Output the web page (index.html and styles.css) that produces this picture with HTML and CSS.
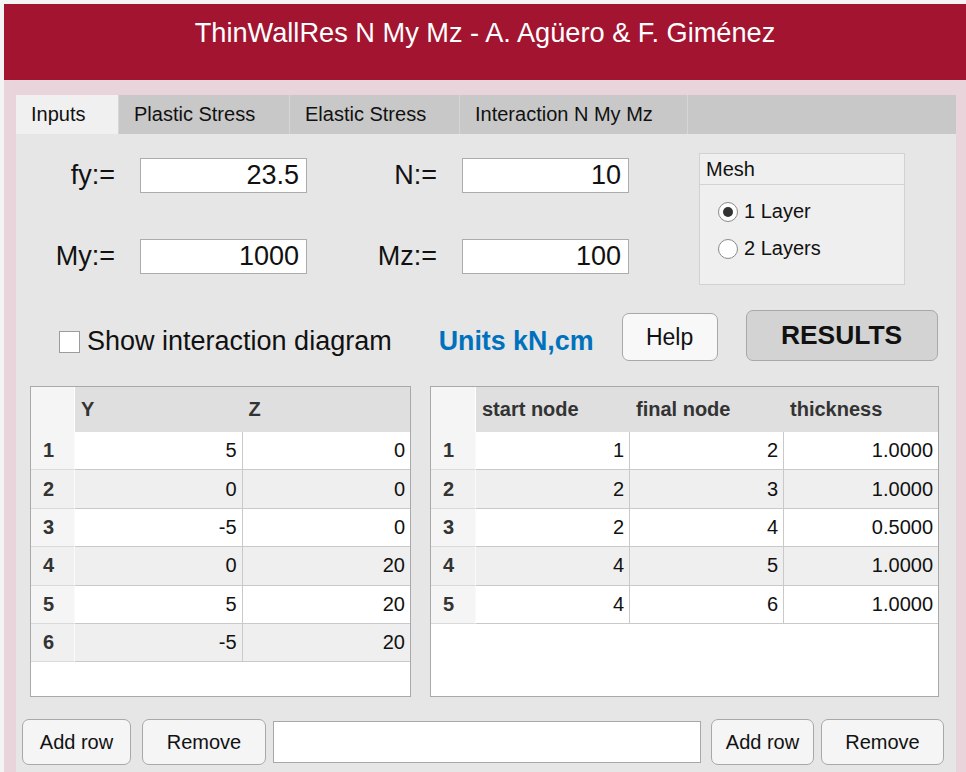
FILE: index.html
```html
<!DOCTYPE html>
<html lang="en">
<head>
    <meta charset="UTF-8">
    <meta name="viewport" content="width=device-width, initial-scale=1.0">
    <title>ThinWallRes N My Mz</title>
    <link rel="stylesheet" href="styles.css">
</head>
<body>
    <div class="window">
        <div class="app-header">ThinWallRes N My Mz - A. Agüero &amp; F. Giménez</div>
        <div class="app-body">
            <div class="tab-group">
                <div class="tab-bar">
                    <div class="tab active tab-inputs">Inputs</div>
                    <div class="tab tab-plastic">Plastic Stress</div>
                    <div class="tab tab-elastic">Elastic Stress</div>
                    <div class="tab tab-interaction">Interaction N My Mz</div>
                </div>
                <div class="tab-content">
                    <div class="top-row">
                        <div class="params">
                            <label class="param-label" for="fy">fy:=</label>
                            <input class="param-input" id="fy" type="text" value="23.5">
                            <label class="param-label" for="n">N:=</label>
                            <input class="param-input" id="n" type="text" value="10">
                            <label class="param-label" for="my">My:=</label>
                            <input class="param-input" id="my" type="text" value="1000">
                            <label class="param-label" for="mz">Mz:=</label>
                            <input class="param-input" id="mz" type="text" value="100">
                        </div>
                        <div class="mesh">
                            <div class="mesh-title">Mesh</div>
                            <div class="mesh-options">
                                <div class="radio-row"><span class="radio checked"></span>1 Layer</div>
                                <div class="radio-row"><span class="radio"></span>2 Layers</div>
                            </div>
                        </div>
                    </div>

                    <div class="action-row">
                        <div class="check-group">
                            <span class="checkbox"></span>
                            <span>Show interaction diagram</span>
                        </div>
                        <div class="units">Units kN,cm</div>
                        <button class="btn btn-help" type="button">Help</button>
                        <button class="btn btn-results" type="button">RESULTS</button>
                    </div>

                    <div class="tables-row">
                        <div class="grid-box grid-nodes">
                            <table class="grid">
                                <colgroup>
                                    <col class="col-rownum">
                                    <col class="col-node">
                                    <col class="col-node">
                                </colgroup>
                                <thead>
                                    <tr><th class="corner"></th><th>Y</th><th>Z</th></tr>
                                </thead>
                                <tbody>
                                    <tr><th>1</th><td>5</td><td>0</td></tr>
                                    <tr><th>2</th><td>0</td><td>0</td></tr>
                                    <tr><th>3</th><td>-5</td><td>0</td></tr>
                                    <tr><th>4</th><td>0</td><td>20</td></tr>
                                    <tr><th>5</th><td>5</td><td>20</td></tr>
                                    <tr><th>6</th><td>-5</td><td>20</td></tr>
                                </tbody>
                            </table>
                        </div>
                        <div class="grid-box grid-elements">
                            <table class="grid">
                                <colgroup>
                                    <col class="col-rownum">
                                    <col class="col-elem">
                                    <col class="col-elem">
                                    <col class="col-elem">
                                </colgroup>
                                <thead>
                                    <tr><th class="corner"></th><th>start node</th><th>final node</th><th>thickness</th></tr>
                                </thead>
                                <tbody>
                                    <tr><th>1</th><td>1</td><td>2</td><td>1.0000</td></tr>
                                    <tr><th>2</th><td>2</td><td>3</td><td>1.0000</td></tr>
                                    <tr><th>3</th><td>2</td><td>4</td><td>0.5000</td></tr>
                                    <tr><th>4</th><td>4</td><td>5</td><td>1.0000</td></tr>
                                    <tr><th>5</th><td>4</td><td>6</td><td>1.0000</td></tr>
                                </tbody>
                            </table>
                        </div>
                    </div>

                    <div class="bottom-row">
                        <button class="btn btn-add" type="button">Add row</button>
                        <button class="btn btn-remove" type="button">Remove</button>
                        <input class="message" type="text">
                        <button class="btn btn-add2" type="button">Add row</button>
                        <button class="btn btn-remove2" type="button">Remove</button>
                    </div>
                </div>
            </div>
        </div>
    </div>
</body>
</html>
```

FILE: styles.css
```css
html, body {
    margin: 0;
    height: 100%;
    overflow: hidden;
}
body {
    font-family: "Liberation Sans", Arial, sans-serif;
    background-color: #f4f4f4;
    color: #111;
}
.window {
    margin: 4px 0 0 4px;
    height: calc(100% - 4px);
    display: flex;
    flex-direction: column;
}
.app-header {
    box-sizing: border-box;
    height: 76px;
    padding-top: 13px;
    background-color: #a2142f;
    color: #fff;
    font-size: 27.2px;
    line-height: 31px;
    text-align: center;
}
.app-body {
    flex: 1;
    background-color: #e9d4db;
    padding: 15px 10px 0 12px;
}
.tab-group {
    background-color: #e6e6e6;
    height: 100%;
}
.tab-bar {
    display: flex;
    height: 39px;
    background-color: #c8c8c8;
}
.tab {
    box-sizing: border-box;
    padding-left: 15px;
    font-size: 20px;
    line-height: 39px;
    border-right: 1px solid #d6d6d6;
}
.tab.active {
    background-color: #f0f0f0;
}
.tab-inputs { width: 103px; }
.tab-plastic { width: 171px; }
.tab-elastic { width: 170px; }
.tab-interaction { width: 228px; }

/* parameters + mesh */
.top-row {
    display: flex;
    align-items: flex-start;
    padding: 19px 0 0 16px;
}
.params {
    display: grid;
    grid-template-columns: 83px 167px 105px 167px;
    grid-template-rows: 35px 35px;
    column-gap: 25px;
    row-gap: 46px;
    margin-top: 5px;
}
.param-label {
    font-size: 27px;
    line-height: 35px;
    text-align: right;
    color: #111;
}
.param-input {
    box-sizing: border-box;
    width: 167px;
    height: 35px;
    margin: 0;
    padding: 0 7px 0 4px;
    border: 1px solid #acacac;
    background: #fff;
    font-family: inherit;
    font-size: 27px;
    text-align: right;
    color: #111;
}
.mesh {
    box-sizing: border-box;
    width: 206px;
    height: 132px;
    margin-left: 70px;
    border: 1px solid #d2d2d2;
    background-color: #efefef;
}
.mesh-title {
    height: 30px;
    line-height: 30px;
    padding-left: 6px;
    font-size: 20px;
    border-bottom: 1px solid #d2d2d2;
}
.mesh-options {
    display: flex;
    flex-direction: column;
    gap: 14px;
    padding: 15px 0 0 18px;
}
.radio-row {
    display: flex;
    align-items: center;
    gap: 6px;
    font-size: 20px;
    line-height: 23px;
}
.radio {
    box-sizing: border-box;
    width: 20px;
    height: 20px;
    border: 1px solid #8a8a8a;
    border-radius: 50%;
    background: #fff;
    display: flex;
    align-items: center;
    justify-content: center;
}
.radio.checked::after {
    content: "";
    width: 10px;
    height: 10px;
    border-radius: 50%;
    background: #333;
}

/* checkbox, units, buttons */
.action-row {
    display: flex;
    align-items: flex-start;
    height: 51px;
    margin-top: 25px;
    padding-left: 43px;
}
.check-group {
    display: flex;
    align-items: center;
    gap: 7px;
    margin-top: 16px;
    font-size: 27px;
    line-height: 31px;
}
.checkbox {
    box-sizing: border-box;
    width: 21px;
    height: 22px;
    border: 1px solid #9c9c9c;
    background: #fff;
}
.units {
    margin: 16px 0 0 47px;
    font-size: 26.8px;
    line-height: 31px;
    font-weight: bold;
    color: #0072bd;
}
.btn {
    box-sizing: border-box;
    margin: 0;
    padding: 0;
    border: 1px solid #a8a8a8;
    border-radius: 7px;
    background-color: #f5f5f5;
    font-family: inherit;
    font-size: 20px;
    color: #111;
    cursor: pointer;
}
.btn-help {
    width: 96px;
    height: 48px;
    margin: 3px 0 0 28px;
    font-size: 23px;
    background-color: #f8f8f8;
}
.btn-results {
    width: 192px;
    height: 51px;
    margin-left: 28px;
    background-color: #d3d3d3;
    font-size: 26.4px;
    font-weight: bold;
}

/* tables */
.tables-row {
    display: flex;
    gap: 19px;
    margin-top: 25px;
    padding-left: 14px;
}
.grid-box {
    box-sizing: border-box;
    height: 311px;
    border: 1px solid #a9a9a9;
    background: #fff;
    overflow: hidden;
}
.grid-nodes { width: 381px; }
.grid-elements { width: 509px; }
.grid {
    width: 100%;
    table-layout: fixed;
    border-collapse: separate;
    border-spacing: 0;
    font-size: 20px;
}
.grid-nodes .col-rownum { width: 44px; }
.grid-nodes .col-node { width: 167px; }
.grid-elements .col-rownum { width: 45px; }
.grid-elements .col-elem { width: 154px; }
.grid thead tr { height: 45px; }
.grid tbody tr { height: 38.4px; }
.grid thead th {
    padding: 0 0 0 6px;
    background-color: #dfdfdf;
    color: #333;
    font-weight: bold;
    text-align: left;
}
.grid thead th.corner {
    background-color: #f5f5f5;
    border-right: 1px solid #fff;
}
.grid tbody th {
    padding: 0 0 0 12px;
    background-color: #f5f5f5;
    color: #333;
    font-weight: bold;
    text-align: left;
    border-bottom: 1px solid #dadada;
    border-right: 1px solid #fafafa;
}
.grid td {
    padding: 0 5px 0 0;
    text-align: right;
    color: #111;
    border-bottom: 1px solid #c9c9c9;
    border-right: 1px solid #c9c9c9;
}
.grid td:last-child {
    border-right: none;
}
.grid tbody tr:nth-child(even) td {
    background-color: #efefef;
}
.grid tbody tr:nth-child(even) th {
    background-color: #f0f0f0;
}

/* bottom buttons */
.bottom-row {
    display: flex;
    align-items: center;
    margin-top: 22px;
    padding-left: 6px;
    height: 46px;
}
.btn-add { width: 109px; height: 46px; }
.btn-remove { width: 124px; height: 46px; margin-left: 11px; }
.message {
    box-sizing: border-box;
    width: 428px;
    height: 42px;
    margin: 0 0 0 7px;
    border: 1px solid #a8a8a8;
    background: #fff;
}
.btn-add2 { width: 103px; height: 46px; margin-left: 10px; }
.btn-remove2 { width: 123px; height: 46px; margin-left: 7px; }
```
